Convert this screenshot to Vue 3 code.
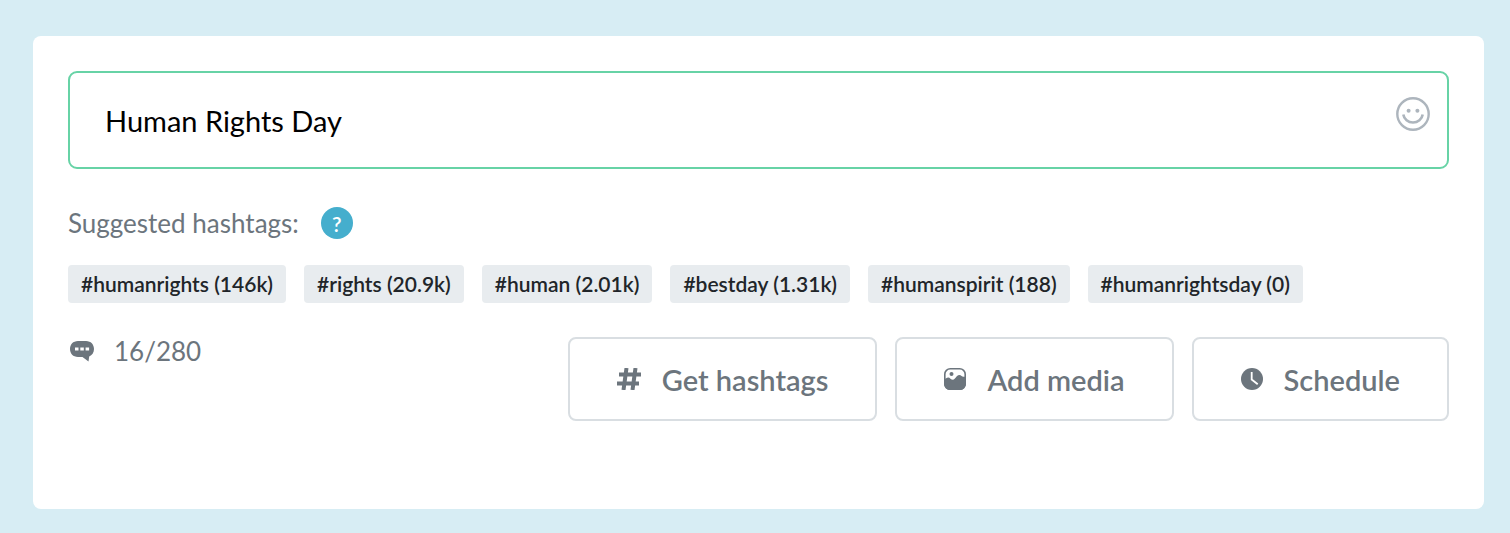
<script setup>
import { computed, ref } from "vue";

const maxLength = 280;
const message = ref("Human Rights Day");
const count = computed(() => message.value.length);

const hashtags = [
  { name: "humanrights", uses: "146k" },
  { name: "rights", uses: "20.9k" },
  { name: "human", uses: "2.01k" },
  { name: "bestday", uses: "1.31k" },
  { name: "humanspirit", uses: "188" },
  { name: "humanrightsday", uses: "0" },
];

function addHashtag(tag) {
  message.value += " #" + tag.name;
}
</script>

<template>
  <main class="page">
    <form class="card" @submit.prevent>
      <div class="field">
        <input v-model="message" type="text" class="message" aria-label="Message" :maxlength="maxLength" />
        <button type="button" class="emoji" aria-label="Add emoji">
          <svg width="34" height="34" viewBox="0 0 34 34" fill="none" stroke="#adb5bd">
            <circle cx="17" cy="17" r="15.7" stroke-width="2.4" />
            <path d="M7.3 17.5a9.8 9.3 0 0 0 19.4 0" stroke-width="2.6" />
            <circle cx="12.6" cy="13.7" r="2" fill="#adb5bd" stroke="none" />
            <circle cx="21.4" cy="13.7" r="2" fill="#adb5bd" stroke="none" />
          </svg>
        </button>
      </div>

      <div class="suggested">
        <span>Suggested hashtags:</span>
        <button type="button" class="help" aria-label="Help">?</button>
      </div>

      <div class="tags">
        <button v-for="tag in hashtags" :key="tag.name" type="button" class="tag" @click="addHashtag(tag)">
          #{{ tag.name }} ({{ tag.uses }})
        </button>
      </div>

      <div class="footer">
        <div class="counter">
          <svg width="24" height="22" viewBox="0 0 24 22">
            <path
              d="M8 1h8c5 0 8 3.6 8 8 0 3.6-2 6.4-4.8 7.4l-.7 5.1-6-4.500H8c-5 0-8-3.600-8-8s3-8 8-8z"
              fill="#6c757d"
            />
            <path d="M5 7.500h3.500v3H5zM10.300 7.500h3.500v3h-3.500zM15.600 7.500h3.500v3h-3.500z" fill="#fff" />
          </svg>
          <span>{{ count }}/{{ maxLength }}</span>
        </div>

        <div class="actions">
          <button type="button" class="action">
            <svg width="24" height="22" viewBox="0 0 24 22" fill="none" stroke="#6c757d" stroke-width="4">
              <path d="M9.500 0l-3 22M18.500 0l-3 22M2 6.500h22M0 15.500h22" />
            </svg>
            Get hashtags
          </button>
          <button type="button" class="action">
            <svg width="22" height="22" viewBox="0 0 22 22">
              <rect x="0.8" y="0.8" width="20.4" height="20.4" rx="5.5" fill="#fff" stroke="#6c757d" stroke-width="1.6" />
              <path
                d="M0 11c2 0 2.500-1.500 4.200-1.500S7 11.800 9 11.800 12.500 7 15.200 7c2.200 0 2.600 1.800 4.300 1.800H22V16a6 6 0 0 1-6 6H6a6 6 0 0 1-6-6z"
                fill="#6c757d"
              />
              <circle cx="7.5" cy="6" r="2" fill="#6c757d" />
            </svg>
            Add media
          </button>
          <button type="button" class="action">
            <svg width="22" height="22" viewBox="0 0 22 22">
              <circle cx="11" cy="11" r="11" fill="#6c757d" />
              <path d="M10.700 4v7.500l6 4.800" fill="none" stroke="#fff" stroke-width="1.8" />
            </svg>
            Schedule
          </button>
        </div>
      </div>
    </form>
  </main>
</template>

<style>
body {
  background: #d7edf4;
}
</style>

<style scoped>
.page {
  padding: 36px 26px 24px 33px;
  font-family: Lato, "Open Sans", sans-serif;
  color: #6c757d;
}

.card {
  padding: 35px 35px 88px;
  background: #fff;
  border-radius: 8px;
}

button,
input {
  margin: 0;
  font-family: inherit;
}

button {
  cursor: pointer;
}

.field {
  display: flex;
  align-items: flex-start;
  padding: 24px 17px 24px 35px;
  border: 2px solid #67d3a6;
  border-radius: 9px;
}

.message {
  flex: 1;
  min-width: 0;
  height: 46px;
  padding: 0;
  border: 0;
  outline: none;
  background: none;
  color: #000;
  font-size: 29px;
}

.emoji {
  display: flex;
  padding: 0;
  border: 0;
  background: none;
}

.suggested {
  display: flex;
  align-items: center;
  gap: 22px;
  margin-top: 38px;
  font-size: 26px;
  line-height: 32px;
}

.help {
  width: 32px;
  height: 32px;
  padding: 0;
  border: 0;
  border-radius: 50%;
  background: #45aecd;
  color: #fff;
  font-size: 21px;
  font-weight: 600;
}

.tags {
  display: flex;
  flex-wrap: wrap;
  gap: 18px;
  margin-top: 26px;
}

.tag {
  height: 38px;
  padding: 0 13px 2px;
  border: 0;
  border-radius: 4px;
  background: #e8ecef;
  color: #212529;
  font-size: 21px;
  font-weight: 600;
}

.footer {
  display: flex;
  justify-content: space-between;
  align-items: flex-start;
  margin-top: 34px;
}

.counter {
  display: flex;
  align-items: center;
  gap: 20px;
  padding-left: 2px;
  font-size: 26px;
  line-height: 28px;
}

.actions {
  display: flex;
  flex-wrap: wrap;
  gap: 18px;
}

.action {
  display: flex;
  align-items: center;
  gap: 21px;
  height: 84px;
  padding: 0 47px;
  border: 2px solid #d9dee2;
  border-radius: 8px;
  background: #fff;
  color: #6c757d;
  font-size: 29px;
  font-weight: 600;
}
</style>
